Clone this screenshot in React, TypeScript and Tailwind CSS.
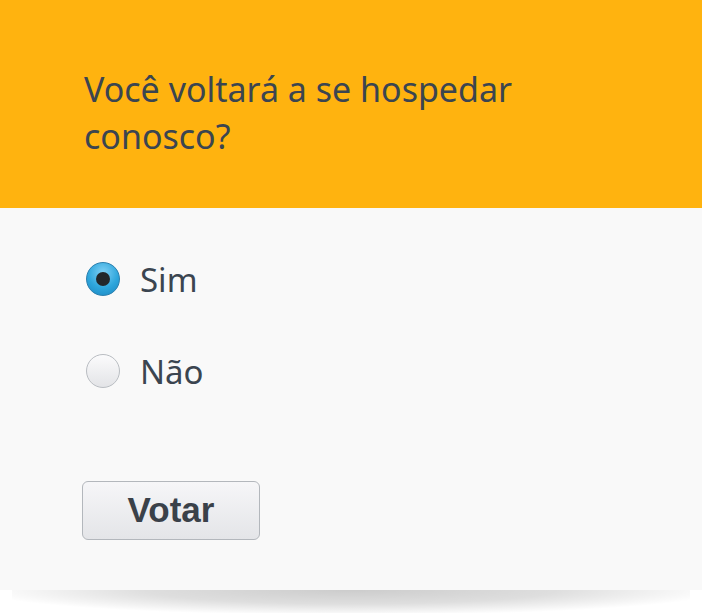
import React, { useState } from 'react';

const options = ['Sim', 'Não'];

const Radio: React.FC<{ checked: boolean }> = ({ checked }) => (
  <span
    className={`flex h-[34px] w-[34px] shrink-0 items-center justify-center rounded-full border ${
      checked
        ? 'border-[#2b7fae] bg-[radial-gradient(circle_at_50%_30%,#7fd0f5_0%,#2ea6dc_55%,#1b86c0_100%)]'
        : 'border-[#b9bdc2] bg-gradient-to-b from-[#fbfbfc] to-[#e3e4e7]'
    }`}
  >
    {checked && <span className="h-[14px] w-[14px] rounded-full bg-[#23272b]" />}
  </span>
);

export default function App() {
  const [choice, setChoice] = useState('Sim');

  return (
    <div className="w-[702px] bg-white font-['Noto_Sans',sans-serif]">
      <div className="bg-[#f9f9f9]">
        {/* Question */}
        <div className="h-[208px] bg-[#ffb30f] px-[84px] pt-[66px]">
          <h1 className="text-[34px] leading-[47px] text-[#3b4550]">
            Você voltará a se hospedar conosco?
          </h1>
        </div>

        {/* Answers */}
        <div className="px-[86px] pt-[54px] pb-[50px]">
          <div className="flex flex-col gap-[58px]">
            {options.map((o) => (
              <label
                key={o}
                className="flex h-[34px] cursor-pointer items-center gap-[20px]"
                onClick={() => setChoice(o)}
              >
                <Radio checked={choice === o} />
                <span className="text-[33px] leading-none text-[#3b4550]">{o}</span>
              </label>
            ))}
          </div>

          <button className="-ml-[4px] mt-[93px] h-[59px] w-[178px] rounded-[6px] border border-[#b3b7bc] bg-gradient-to-b from-[#f6f6f8] to-[#e4e5e8] font-['Liberation_Sans',Arial,sans-serif] text-[35px] font-bold text-[#3a4149]">
            Votar
          </button>
        </div>
      </div>

      {/* Drop shadow */}
      <div className="mx-[12px] h-[23px] bg-[radial-gradient(ellipse_55%_110%_at_50%_0%,rgba(0,0,0,0.2),rgba(0,0,0,0.13)_55%,transparent_100%)]" />
    </div>
  );
}
